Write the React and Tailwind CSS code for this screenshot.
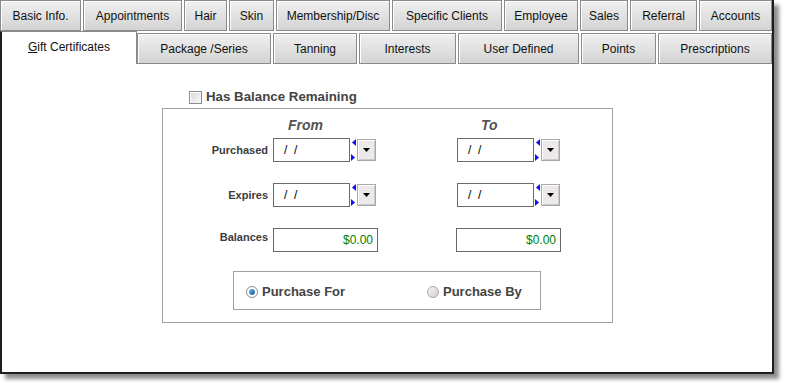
import React from 'react';

const font = { fontFamily: '"Liberation Sans", Arial, sans-serif' };

const topTabs = [
  { text: 'Basic Info.', w: 'w-[81px]' },
  { text: 'Appointments', w: 'w-[99px]' },
  { text: 'Hair', w: 'w-[43px]' },
  { text: 'Skin', w: 'w-[45px]' },
  { text: 'Membership/Disc', w: 'w-[114px]' },
  { text: 'Specific Clients', w: 'w-[110px]' },
  { text: 'Employee', w: 'w-[74px]' },
  { text: 'Sales', w: 'w-[48px]' },
  { text: 'Referral', w: 'w-[67px]' },
  { text: 'Accounts', w: 'flex-1' },
];

const bottomTabs = [
  { text: 'Package /Series', w: 'w-[134px]' },
  { text: 'Tanning', w: 'w-[84px]' },
  { text: 'Interests', w: 'w-[97px]' },
  { text: 'User Defined', w: 'w-[121px]' },
  { text: 'Points', w: 'w-[75px]' },
  { text: 'Prescriptions', w: 'flex-1' },
];

const Tab = ({ text, w, h }) => (
  <div
    className={`${w} ${h} flex items-center justify-center border border-[#8a8a8a] bg-gradient-to-b from-[#f0f0f0] to-[#d3d3d3] shadow-[inset_1px_1px_0_#ffffff] text-[12px] text-[#111111]`}
  >
    {text}
  </div>
);

const Spinner = () => (
  <svg width="5" height="22" viewBox="0 0 5 22" className="ml-[1px]">
    <polygon points="5,0 1,3.5 5,7" fill="#1010ee" />
    <polygon points="0,15 4,18.5 0,22" fill="#1010ee" />
  </svg>
);

const DropButton = () => (
  <div className="ml-[1px] w-[19px] h-[22px] border border-[#a8a8a8] bg-[#ece9e8] shadow-[inset_1px_1px_0_#ffffff,inset_-1px_-1px_0_#c8c8c8] flex items-center justify-center">
    <svg width="7" height="4" viewBox="0 0 7 4">
      <polygon points="0,0 7,0 3.5,4" fill="#000" />
    </svg>
  </div>
);

const DateField = () => (
  <div className="flex items-center">
    <div className="w-[77px] h-[24px] border border-[#6a6a6a] bg-white flex items-center pl-[10px] text-[12px] text-black whitespace-pre">
      {'/  /'}
    </div>
    <Spinner />
    <DropButton />
  </div>
);

const MoneyField = () => (
  <div className="w-[105px] h-[24px] border border-[#6a6a6a] bg-white flex items-center justify-end pr-[4px] text-[12px] text-[#008000]">
    $0.00
  </div>
);

const Radio = ({ checked }) =>
  checked ? (
    <div className="w-[12px] h-[12px] rounded-full border border-[#8c8c8c] bg-white flex items-center justify-center">
      <div className="w-[6px] h-[6px] rounded-full bg-gradient-to-br from-[#6db3ea] to-[#1b5a98]" />
    </div>
  ) : (
    <div className="w-[12px] h-[12px] rounded-full border border-[#a8a8a8] bg-gradient-to-br from-[#f6f6f6] to-[#cfcfcf]" />
  );

const Row = ({ label, children, top }) => (
  <div className={`flex ${top ? 'items-start' : 'items-center'}`}>
    <div
      className={`w-[105px] text-right text-[11px] font-bold text-[#3c3c3c] leading-[13px] ${top ? 'pt-[3px]' : ''}`}
    >
      {label}
    </div>
    <div className="ml-[5px]">{children[0]}</div>
    <div className={top ? 'ml-[78px]' : 'ml-[81px]'}>{children[1]}</div>
  </div>
);

export default function App() {
  return (
    <div className="w-[786px] h-[386px] bg-white" style={font}>
      <div className="w-[774px] h-[374px] flex flex-col border-r-2 border-b-2 border-[#1e1e1e] shadow-[5px_5px_4px_rgba(0,0,0,0.45)] bg-white">
        {/* first tab row */}
        <div className="flex gap-[2px] h-[31px]">
          {topTabs.map((t) => (
            <Tab key={t.text} text={t.text} w={t.w} h="h-[31px]" />
          ))}
        </div>

        {/* second tab row */}
        <div className="flex items-end h-[33px]">
          <div className="w-[137px] h-[33px] bg-white border-t border-r border-l-2 border-t-[#8a8a8a] border-r-[#8a8a8a] border-l-[#1e1e1e] flex items-center justify-center pb-[2px] text-[12px] text-[#111111]">
            <span>
              <span className="underline">G</span>ift Certificates
            </span>
          </div>
          <div className="flex-1 flex gap-[2px]">
            {bottomTabs.map((t) => (
              <Tab key={t.text} text={t.text} w={t.w} h="h-[31px]" />
            ))}
          </div>
        </div>

        {/* page body */}
        <div className="flex-1 border-l-2 border-[#1e1e1e] flex flex-col">
          <div className="mt-[26px] ml-[187px] flex items-center h-[14px]">
            <div className="w-[13px] h-[13px] border border-[#8c8c8c] bg-gradient-to-br from-[#d8d8d8] to-[#fafafa] shadow-[inset_1px_1px_0_#ffffff]" />
            <span className="ml-[4px] text-[13.3px] font-bold text-[#444444] leading-[14px]">
              Has Balance Remaining
            </span>
          </div>

          <div className="mt-[4px] ml-[160px] w-[451px] h-[215px] border border-[#a0a0a0] flex flex-col">
            <div className="mt-[8px] h-[16px] flex items-center text-[14px] font-bold italic text-[#555555]">
              <span className="ml-[125px]">From</span>
              <span className="ml-[158px]">To</span>
            </div>

            <div className="mt-[5px]">
              <Row label="Purchased">
                <DateField />
                <DateField />
              </Row>
            </div>

            <div className="mt-[21px]">
              <Row label="Expires">
                <DateField />
                <DateField />
              </Row>
            </div>

            <div className="mt-[21px]">
              <Row label="Balances" top>
                <MoneyField />
                <MoneyField />
              </Row>
            </div>

            <div className="mt-[19px] ml-[70px] w-[308px] h-[39px] border border-[#a0a0a0] flex items-center pt-[2px] text-[13px] font-bold text-[#444444]">
              <div className="w-[181px] ml-[12px] flex items-center">
                <Radio checked />
                <span className="ml-[4px]">Purchase For</span>
              </div>
              <div className="flex items-center">
                <Radio />
                <span className="ml-[4px]">Purchase By</span>
              </div>
            </div>
          </div>
        </div>
      </div>
    </div>
  );
}
